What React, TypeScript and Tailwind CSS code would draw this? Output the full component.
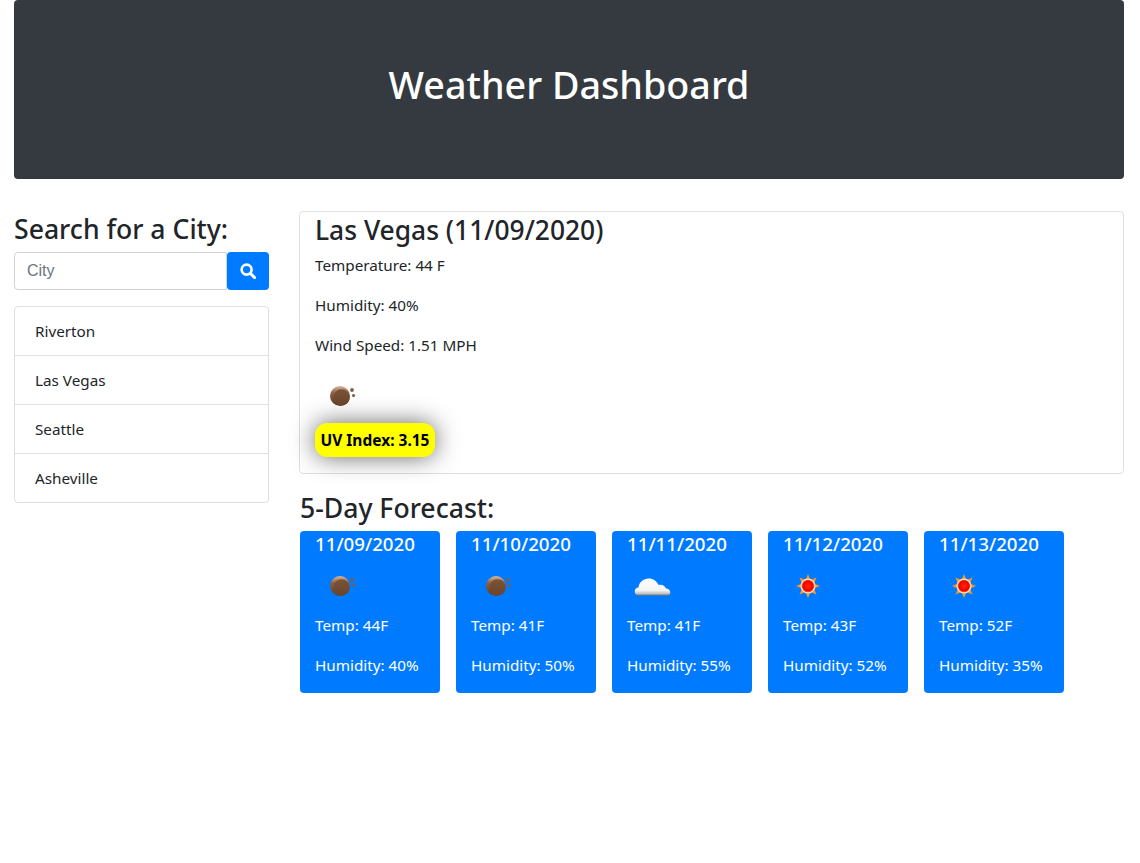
const FONT = "font-['Noto_Sans','Open_Sans',sans-serif]";

function Ball() {
  return (
    <svg width="50" height="50" viewBox="0 0 50 50">
      <defs>
        <linearGradient id="ballg" x1="0" y1="0" x2="0" y2="1">
          <stop offset="0" stopColor="#d8b79e" />
          <stop offset="0.35" stopColor="#8a5f42" />
          <stop offset="1" stopColor="#5f3f28" />
        </linearGradient>
        <linearGradient id="ballin" x1="0" y1="0" x2="0" y2="1">
          <stop offset="0" stopColor="#7a5337" />
          <stop offset="1" stopColor="#6a452c" />
        </linearGradient>
      </defs>
      <circle cx="25" cy="26" r="10" fill="url(#ballg)" />
      <circle cx="26.5" cy="27.5" r="8.2" fill="url(#ballin)" />
      <circle cx="37" cy="20" r="1.9" fill="#7b5f4c" />
      <circle cx="38.5" cy="25.5" r="1.6" fill="#7b5f4c" />
    </svg>
  );
}

function Cloud() {
  return (
    <svg width="50" height="50" viewBox="0 0 50 50">
      <defs>
        <linearGradient id="cloudg" x1="0" y1="0" x2="0" y2="1">
          <stop offset="0" stopColor="#ffffff" />
          <stop offset="0.7" stopColor="#f4f4f4" />
          <stop offset="0.88" stopColor="#c4c4c4" />
          <stop offset="1" stopColor="#777777" />
        </linearGradient>
      </defs>
      <path
        d="M11.5 35.5 C6.5 35.5 6.5 27.5 11.5 27.5 C12 22 16.5 18.5 21.5 18.5 C26.5 18.5 29.5 21 31.5 25 C34.5 24 38 25.5 39 28.5 C44 28.5 45 35.5 40 35.5 Z"
        fill="url(#cloudg)"
      />
    </svg>
  );
}

function Sun() {
  return (
    <svg width="50" height="50" viewBox="0 0 50 50">
      <defs>
        <radialGradient id="sung" cx="0.5" cy="0.5" r="0.5">
          <stop offset="0" stopColor="#ff2a00" />
          <stop offset="0.8" stopColor="#f00000" />
          <stop offset="1" stopColor="#ff7a30" />
        </radialGradient>
      </defs>
      <polygon
        points="25,14 27.5,20 33.5,17.5 31,23.5 37,26 31,28.5 33.5,34.5 27.5,32 25,38 22.5,32 16.5,34.5 19,28.5 13,26 19,23.5 16.5,17.5 22.5,20"
        fill="#ef9a2a"
      />
      <circle cx="25" cy="26" r="7.5" fill="#ffe2c8" />
      <circle cx="25" cy="26" r="6.3" fill="url(#sung)" />
    </svg>
  );
}

function SearchIcon() {
  return (
    <svg width="16" height="16" viewBox="0 0 16 16" fill="none" stroke="white">
      <circle cx="6.6" cy="6.6" r="5" strokeWidth="2.6" />
      <path d="M10.5 10.5 L14.6 14.6" strokeWidth="3" strokeLinecap="round" />
    </svg>
  );
}

const days = [
  { d: "11/09/2020", i: <Ball />, t: "44F", h: "40%" },
  { d: "11/10/2020", i: <Ball />, t: "41F", h: "50%" },
  { d: "11/11/2020", i: <Cloud />, t: "41F", h: "55%" },
  { d: "11/12/2020", i: <Sun />, t: "43F", h: "52%" },
  { d: "11/13/2020", i: <Sun />, t: "52F", h: "35%" },
];

export default function App() {
  return (
    <div className={`${FONT} pl-[14px] pr-[16px] text-[15.25px] leading-6 text-[#212529] bg-white min-h-[863px]`}>
      <header className="h-[179px] rounded bg-[#343a40] flex items-center justify-center">
        <h1 className="text-[37.7px] leading-[48px] font-medium text-white mt-[-9px]">Weather Dashboard</h1>
      </header>
      <div className="flex mt-[32px] gap-[30px]">
        <aside className="w-[255px] shrink-0">
          <h3 className="text-[26.6px] leading-[34px] font-medium mb-[6px] mt-[1px]">Search for a City:</h3>
          <div className="flex h-[38px]">
            <div className="flex-1 border border-[#ced4da] rounded-l px-3 flex items-center font-['Liberation_Sans',sans-serif] text-[16px] text-[#6c757d]">
              City
            </div>
            <div className="w-[42px] bg-[#007bff] rounded-[4px] flex items-center justify-center">
              <SearchIcon />
            </div>
          </div>
          <ul className="mt-[16px] border border-[#dfdfdf] rounded">
            {["Riverton", "Las Vegas", "Seattle", "Asheville"].map((c, i) => (
              <li key={c} className={`h-[48px] px-5 flex items-center ${i ? "border-t border-[#dfdfdf] h-[49px]" : ""}`}>
                {c}
              </li>
            ))}
          </ul>
        </aside>
        <main className="flex-1">
          <section className="border border-[#dfdfdf] rounded h-[263px] px-[15px]">
            <h2 className="text-[26.4px] leading-[34px] font-medium mt-px mb-[6px]">Las Vegas (11/09/2020)</h2>
            <p className="mb-4">Temperature: 44 F</p>
            <p className="mb-4">Humidity: 40%</p>
            <p>Wind Speed: 1.51 MPH</p>
            <div className="mt-[13px] h-[50px]"><Ball /></div>
            <div className="mt-[3px] inline-block bg-[#ffff00] rounded-[12px] px-[5.5px] py-[5px] text-[15.5px] font-bold text-black shadow-[0_0_25px_rgba(0,0,0,0.6)]">
              UV Index: 3.15
            </div>
          </section>
          <h3 className="text-[26.6px] leading-[34px] font-medium mt-[17px] mb-[6px] ml-px">5-Day Forecast:</h3>
          <div className="flex gap-4 ml-px">
            {days.map((x) => (
              <div key={x.d} className="w-[140px] h-[162px] bg-[#007bff] text-white rounded px-[15px]">
                <h4 className="text-[18.7px] leading-[26px] font-medium">{x.d}</h4>
                <div className="h-[50px] mt-[3px] mb-[1px]">{x.i}</div>
                <p className="mb-4 mt-[3px]">Temp: {x.t}</p>
                <p>Humidity: {x.h}</p>
              </div>
            ))}
          </div>
        </main>
      </div>
    </div>
  );
}
